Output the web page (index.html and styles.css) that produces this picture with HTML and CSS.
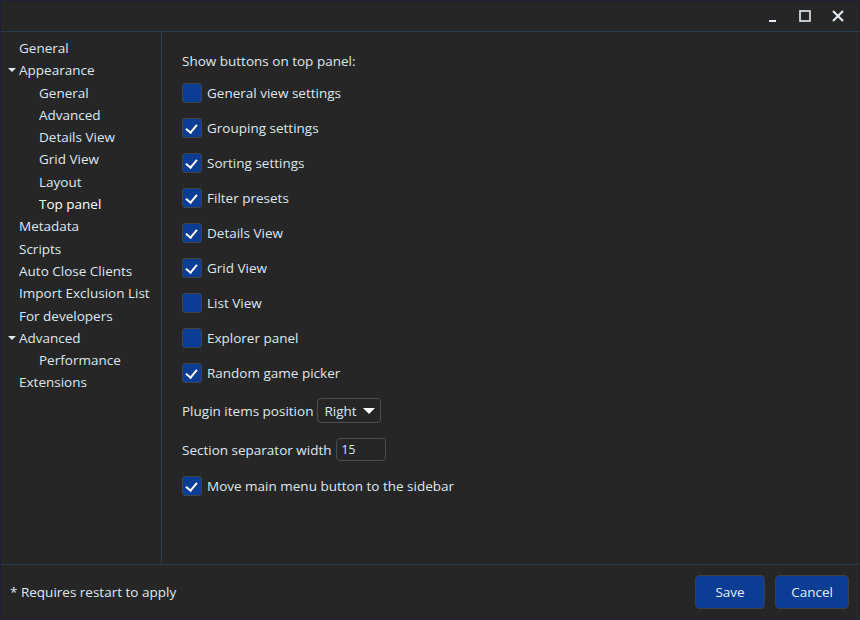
FILE: index.html
```html
<!DOCTYPE html>
<html>
<head>
<meta charset="utf-8">
<link rel="stylesheet" href="styles.css">
</head>
<body>
<div class="window">
  <div class="titlebar">
    <div class="tb-btn min"><svg width="12" height="12" viewBox="0 0 12 12"><rect x="3" y="10" width="7" height="2" fill="#e6edf5"/></svg></div>
    <div class="tb-btn max"><svg width="12" height="12" viewBox="0 0 12 12"><rect x="1" y="1" width="10" height="10" fill="none" stroke="#e6edf5" stroke-width="1.6"/></svg></div>
    <div class="tb-btn close"><svg width="12" height="12" viewBox="0 0 12 12"><path d="M1 1 L11 11 M11 1 L1 11" stroke="#e6edf5" stroke-width="2"/></svg></div>
  </div>
  <div class="main">
    <nav class="sidebar">
      <div class="item l1">General</div>
      <div class="item l1"><span class="caret"></span>Appearance</div>
      <div class="item l2">General</div>
      <div class="item l2">Advanced</div>
      <div class="item l2">Details View</div>
      <div class="item l2">Grid View</div>
      <div class="item l2">Layout</div>
      <div class="item l2 selected">Top panel</div>
      <div class="item l1">Metadata</div>
      <div class="item l1">Scripts</div>
      <div class="item l1">Auto Close Clients</div>
      <div class="item l1">Import Exclusion List</div>
      <div class="item l1">For developers</div>
      <div class="item l1"><span class="caret"></span>Advanced</div>
      <div class="item l2">Performance</div>
      <div class="item l1">Extensions</div>
    </nav>
    <section class="content">
      <div class="heading">Show buttons on top panel:</div>
      <label class="check"><span class="box"></span>General view settings</label>
      <label class="check"><span class="box on"></span>Grouping settings</label>
      <label class="check"><span class="box on"></span>Sorting settings</label>
      <label class="check"><span class="box on"></span>Filter presets</label>
      <label class="check"><span class="box on"></span>Details View</label>
      <label class="check"><span class="box on"></span>Grid View</label>
      <label class="check"><span class="box"></span>List View</label>
      <label class="check"><span class="box"></span>Explorer panel</label>
      <label class="check"><span class="box on"></span>Random game picker</label>
      <div class="field f1">Plugin items position <span class="select">Right <span class="dd"></span></span></div>
      <div class="field f2">Section separator width <span class="input">15</span></div>
      <label class="check last"><span class="box on"></span>Move main menu button to the sidebar</label>
    </section>
  </div>
  <div class="footer">
    <div class="note">* Requires restart to apply</div>
    <div class="buttons">
      <button class="btn save">Save</button>
      <button class="btn cancel">Cancel</button>
    </div>
  </div>
</div>
</body>
</html>
```

FILE: styles.css
```css
* { box-sizing: border-box; }
html, body { margin: 0; padding: 0; background: #1c2030; }
body {
  font-family: "Open Sans", "Noto Sans", sans-serif;
  font-size: 13.5px;
  color: #dfe6ee;
}
.window {
  width: 860px;
  height: 620px;
  border: 1px solid #1c2233;
  background: #262626;
  display: flex;
  flex-direction: column;
}
.titlebar {
  height: 31px;
  border-bottom: 1px solid #2e3d4b;
  display: flex;
  justify-content: flex-end;
  align-items: center;
  padding-right: 5px;
}
.tb-btn {
  width: 33px;
  height: 30px;
  display: flex;
  align-items: center;
  justify-content: center;
}
.main {
  flex: 1;
  display: flex;
  min-height: 0;
}
.sidebar {
  width: 161px;
  border-right: 1px solid #2e3d4b;
  padding-top: 5px;
}
.item {
  height: 22.3px;
  line-height: 22px;
  white-space: nowrap;
  position: relative;
}
.item.l1 { padding-left: 18px; }
.item.l2 { padding-left: 38px; }
.item.selected { color: #ffffff; }
.caret {
  position: absolute;
  left: 7px;
  top: 9px;
  width: 0;
  height: 0;
  border-left: 4px solid transparent;
  border-right: 4px solid transparent;
  border-top: 4px solid #dfe6ee;
}
.content {
  flex: 1;
  padding: 19px 0 0 20px;
  display: flex;
  flex-direction: column;
  align-items: flex-start;
}
.heading {
  height: 20px;
  line-height: 20px;
  margin-bottom: 12px;
}
.check {
  display: flex;
  align-items: center;
  height: 20px;
  margin-bottom: 15px;
  gap: 5px;
}
.box {
  width: 20px;
  height: 20px;
  background: #0b3d95;
  border: 1px solid #404448;
  border-radius: 3px;
  position: relative;
}
.box.on::after {
  content: "";
  position: absolute;
  left: 5px;
  top: 3px;
  width: 5px;
  height: 9px;
  border-right: 2px solid #ffffff;
  border-bottom: 2px solid #ffffff;
  transform: rotate(40deg);
}
.field {
  display: flex;
  align-items: center;
  gap: 4px;
}
.f1 { height: 25px; }
.f2 { margin-top: 15px; height: 23px; }
.check.last { margin-top: 15px; }
.select {
  height: 25px;
  width: 64px;
  border: 1px solid #4a4e52;
  border-radius: 4px;
  display: flex;
  align-items: center;
  padding-left: 6px;
  gap: 6px;
}
.dd {
  width: 0;
  height: 0;
  border-left: 6px solid transparent;
  border-right: 6px solid transparent;
  border-top: 6px solid #ffffff;
}
.input {
  height: 23px;
  width: 50px;
  border: 1px solid #4a4e52;
  border-radius: 4px;
  display: flex;
  align-items: center;
  padding-left: 5px;
  font-size: 12px;
}
.footer {
  height: 55px;
  border-top: 1px solid #2e3d4b;
  display: flex;
  align-items: center;
  justify-content: space-between;
  padding: 0 10px 0 9px;
}
.buttons { display: flex; gap: 10px; }
.btn {
  font-family: "Open Sans", "Noto Sans", sans-serif;
  font-size: 13.5px;
  color: #e6edf5;
  background: #0b3d95;
  border: 1px solid #3c4048;
  border-radius: 4px;
  height: 34px;
}
.btn.save { width: 70px; }
.btn.cancel { width: 74px; }
```
